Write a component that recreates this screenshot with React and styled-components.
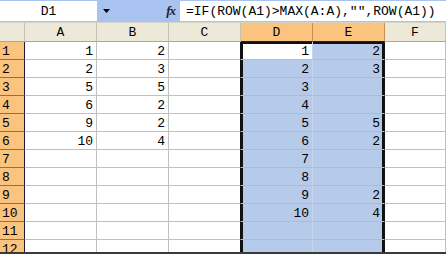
import React from "react";
import styled, { createGlobalStyle } from "styled-components";

const GlobalStyle = createGlobalStyle`
  html, body {
    margin: 0;
    padding: 0;
    background: #ffffff;
  }
  body {
    font-family: "Liberation Mono", "DejaVu Sans Mono", monospace;
    font-size: 13px;
    color: #000;
  }
`;

const columns = ["A", "B", "C", "D", "E", "F"];

const data = [
  { A: 1, B: 2, D: 1, E: 2 },
  { A: 2, B: 3, D: 2, E: 3 },
  { A: 5, B: 5, D: 3 },
  { A: 6, B: 2, D: 4 },
  { A: 9, B: 2, D: 5, E: 5 },
  { A: 10, B: 4, D: 6, E: 2 },
  { D: 7 },
  { D: 8 },
  { D: 9, E: 2 },
  { D: 10, E: 4 },
  {},
  {},
];

const selectedCols = ["D", "E"];

export default function App() {
  return (
    <>
      <GlobalStyle />
      <Window>
        <FormulaBar>
          <NameBox>D1</NameBox>
          <DropButton>
            <svg width="7" height="4" viewBox="0 0 7 4">
              <path d="M0 0h7L3.5 4z" fill="#000" />
            </svg>
          </DropButton>
          <FxLabel>fx</FxLabel>
          <FormulaInput>=IF(ROW(A1)&gt;MAX(A:A),"",ROW(A1))</FormulaInput>
        </FormulaBar>
        <Sheet>
          <HeaderRow>
            <Corner />
            {columns.map((c) => (
              <ColHeader key={c} $selected={selectedCols.includes(c)}>
                {c}
              </ColHeader>
            ))}
          </HeaderRow>
          {data.map((row, i) => (
            <Row key={i}>
              <RowHeader>{i + 1}</RowHeader>
              {columns.map((c) => {
                const inSel = selectedCols.includes(c);
                const active = c === "D" && i === 0;
                return (
                  <Cell
                    key={c}
                    $fill={inSel && !active}
                    $selected={inSel}
                    $left={c === "D"}
                    $right={c === "E"}
                    $top={inSel && i === 0}
                    $beforeSel={c === "C"}
                  >
                    {row[c] ?? ""}
                  </Cell>
                );
              })}
            </Row>
          ))}
        </Sheet>
      </Window>
    </>
  );
}

const Window = styled.div`
  width: 446px;
  height: 254px;
  display: flex;
  flex-direction: column;
  overflow: hidden;
  background: #fff;
`;

const FormulaBar = styled.div`
  height: 23px;
  flex: none;
  display: flex;
  align-items: stretch;
  background: #a8c3f0;
  padding: 1px 0 1px 0;
  box-sizing: border-box;
  border-bottom: 1px solid #d6d3c8;
`;

const NameBox = styled.div`
  width: 97px;
  background: #fff;
  display: flex;
  align-items: center;
  justify-content: center;
  font-size: 13px;
  padding-top: 1px;
`;

const DropButton = styled.div`
  width: 18px;
  display: flex;
  align-items: center;
  justify-content: center;
  padding-bottom: 1px;
`;

const FxLabel = styled.div`
  flex: 1;
  display: flex;
  align-items: center;
  justify-content: flex-end;
  padding-right: 5px;
  font-family: "Liberation Serif", "DejaVu Serif", serif;
  font-style: italic;
  font-weight: bold;
  font-size: 13px;
  color: #222;
  letter-spacing: -1px;
`;

const FormulaInput = styled.div`
  width: 266px;
  flex: none;
  background: #fff;
  display: flex;
  align-items: center;
  padding-left: 6px;
  box-sizing: border-box;
  white-space: nowrap;
  font-size: 13px;
  padding-top: 1px;
`;

const Sheet = styled.div`
  flex: 1;
  overflow: hidden;
  border-bottom: 2px solid #3a3a3a;
`;

const Row = styled.div`
  display: grid;
  grid-template-columns: 25px repeat(5, 72px) 1fr;
  height: 18px;
`;

const HeaderRow = styled(Row)`
  height: 19px;
`;

const HeaderBase = styled.div`
  box-sizing: border-box;
  display: flex;
  align-items: center;
  font-size: 13px;
  color: #000;
  padding-top: 1px;
`;

const Corner = styled(HeaderBase)`
  background: #ece9d8;
  border-right: 1px solid #c5c2b2;
  border-bottom: 1px solid #aca899;
`;

const ColHeader = styled(HeaderBase)`
  justify-content: center;
  background: ${(p) => (p.$selected ? "#fbc47e" : "#ece9d8")};
  border-right: 1px solid ${(p) => (p.$selected ? "#c98f4e" : "#c5c2b2")};
  border-bottom: 1px solid ${(p) => (p.$selected ? "#1c1c3c" : "#aca899")};
`;

const RowHeader = styled(HeaderBase)`
  background: #fbc47e;
  padding-left: 2px;
  border-right: 1px solid #1c1c3c;
  border-bottom: 1px solid #8e6e58;
`;

const selShadow = (p) => {
  const s = [];
  if (p.$left) s.push("inset 2px 0 0 #111");
  if (p.$right) s.push("inset -2px 0 0 #111");
  if (p.$top) s.push("inset 0 2px 0 #111");
  return s.length ? s.join(", ") : "none";
};

const Cell = styled.div`
  box-sizing: border-box;
  display: flex;
  align-items: center;
  justify-content: flex-end;
  padding: 1px ${(p) => (p.$right ? 4 : 3)}px 0 0;
  font-size: 13px;
  background: ${(p) => (p.$fill ? "#b6caea" : "#fff")};
  border-right: 1px solid
    ${(p) =>
      p.$right || p.$beforeSel ? "#111" : p.$selected ? "#c9d6ec" : "#c0c0c0"};
  border-bottom: 1px solid ${(p) => (p.$selected ? "#a9bcdc" : "#c0c0c0")};
  box-shadow: ${selShadow};
`;
